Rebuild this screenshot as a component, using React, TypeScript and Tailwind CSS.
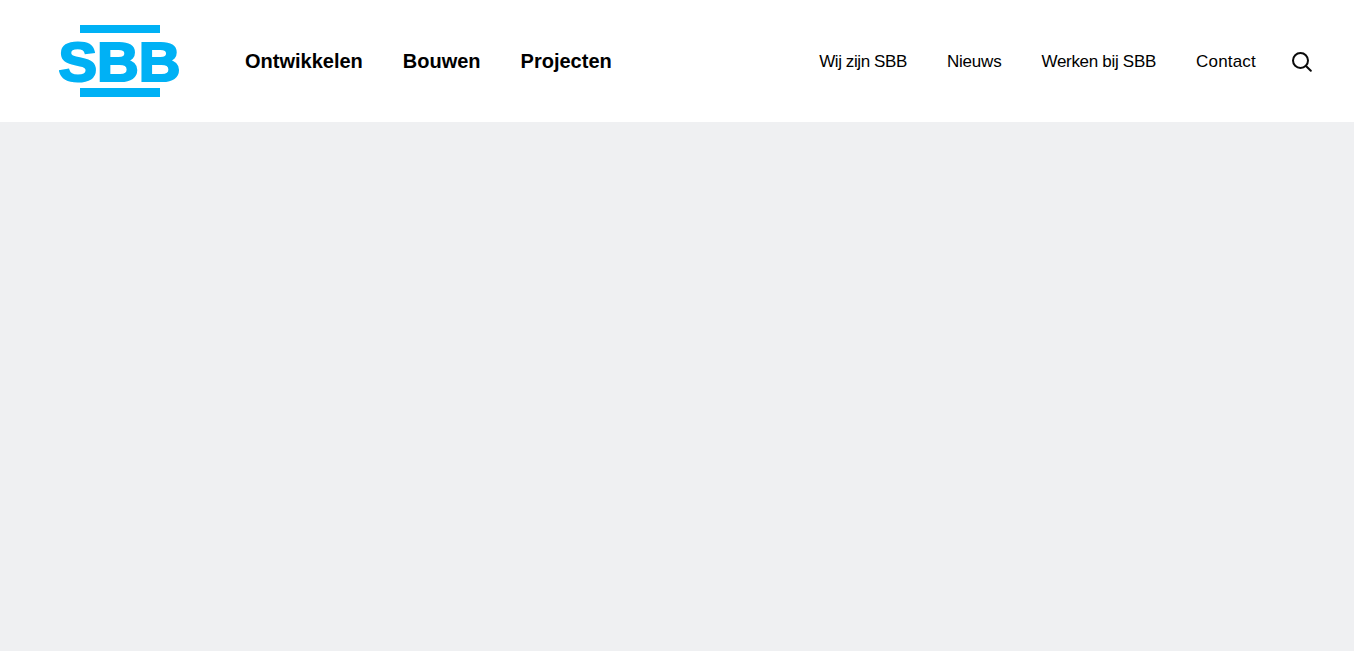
const sans = "font-['Liberation_Sans','Inter',sans-serif]";

function Logo() {
  return (
    <svg width="122" height="72" viewBox="0 0 122 72" fill="none">
      <rect x="21" y="0" width="80" height="8" fill="#00b1f5" />
      <rect x="21" y="63" width="80" height="9" fill="#00b1f5" />
      <text
        x="-0.5"
        y="56"
        fontFamily="'Liberation Sans', sans-serif"
        fontWeight="700"
        fontSize="56"
        textLength="122"
        lengthAdjust="spacingAndGlyphs"
        fill="#00b1f5"
        stroke="#00b1f5"
        strokeWidth="2.2"
      >
        SBB
      </text>
    </svg>
  );
}

function SearchIcon() {
  return (
    <svg width="22" height="22" viewBox="0 0 22 22" fill="none" stroke="#0a0a0a" strokeWidth="2" strokeLinecap="round">
      <circle cx="9.5" cy="10.5" r="7.5" />
      <path d="M15 16l4.8 4.8" />
    </svg>
  );
}

export default function App() {
  return (
    <div className={`flex h-[651px] w-[1366px] flex-col overflow-hidden bg-white pr-3 text-black ${sans}`}>
      <header className="flex h-[122px] items-center bg-white pl-[59px] pr-[41px]">
        <Logo />
        <nav className="ml-[64px] flex gap-10 text-xl font-bold">
          <a>Ontwikkelen</a>
          <a>Bouwen</a>
          <a>Projecten</a>
        </nav>
        <nav className="ml-auto flex items-center gap-10 pt-0.5 text-[17px]">
          <a className="tracking-[-0.4px]">Wij zijn SBB</a>
          <a className="tracking-[-0.2px]">Nieuws</a>
          <a className="tracking-[-0.3px]">Werken bij SBB</a>
          <a className="tracking-[0.2px]">Contact</a>
          <button className="-mt-0.5 -ml-[5px] flex">
            <SearchIcon />
          </button>
        </nav>
      </header>
      <main className="flex-1 bg-[#eff0f2]" />
    </div>
  );
}
